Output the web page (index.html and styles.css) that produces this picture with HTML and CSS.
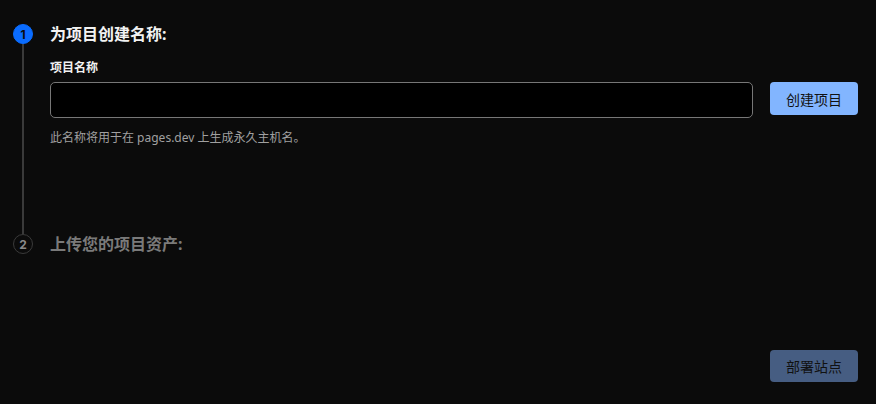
FILE: index.html
```html
<!DOCTYPE html>
<html lang="zh-CN">
<head>
    <meta charset="UTF-8">
    <meta name="viewport" content="width=device-width, initial-scale=1.0">
    <title>创建项目</title>
    <link rel="stylesheet" href="styles.css">
</head>
<body>
    <div class="page">
        <div class="step active">
            <div class="rail">
                <span class="dot">1</span>
                <span class="line"></span>
            </div>
            <div class="content">
                <h2 class="title">为项目创建名称:</h2>
                <label class="label" for="name">项目名称</label>
                <div class="field-row">
                    <input id="name" class="input" type="text">
                    <button class="btn primary">创建项目</button>
                </div>
                <p class="hint">此名称将用于在 pages.dev 上生成永久主机名。</p>
            </div>
        </div>
        <div class="step">
            <div class="rail">
                <span class="dot">2</span>
            </div>
            <div class="content">
                <h2 class="title">上传您的项目资产:</h2>
            </div>
        </div>
        <div class="footer">
            <button class="btn deploy">部署站点</button>
        </div>
    </div>
</body>
</html>
```

FILE: styles.css
```css
body {
    margin: 0;
    background: #0b0b0b;
    font-family: "Noto Sans", "Noto Sans CJK SC", sans-serif;
    color: #e8e8e8;
    height: 100vh;
    box-sizing: border-box;
    overflow: hidden;
}

.page {
    display: flex;
    flex-direction: column;
    height: 100%;
    padding: 24px 18px 22px 13px;
    box-sizing: border-box;
}

.step {
    display: flex;
    gap: 17px;
}

.step.active {
    height: 210px;
}

.rail {
    display: flex;
    flex-direction: column;
    align-items: center;
    width: 20px;
    flex-shrink: 0;
}

.dot {
    width: 20px;
    height: 20px;
    border-radius: 50%;
    box-sizing: border-box;
    display: flex;
    align-items: center;
    justify-content: center;
    font-family: "Inter", "Noto Sans", sans-serif;
    font-size: 12px;
    font-weight: 700;
    border: 1.5px solid #3a3a3a;
    color: #8a8a8a;
}

.active .dot {
    background: #0a6cff;
    border-color: #0a6cff;
    color: #0b0b0b;
}

.line {
    flex: 1;
    width: 2px;
    background: #3a3a3a;
}

.content {
    flex: 1;
    display: flex;
    flex-direction: column;
}

.title {
    margin: 0;
    font-size: 16px;
    line-height: 20px;
    font-weight: 700;
    color: #f2f2f2;
}

.step:not(.active) .title {
    color: #7a7a7a;
}

.label {
    margin-top: 16px;
    font-size: 12px;
    line-height: 16px;
    font-weight: 700;
    color: #f2f2f2;
}

.field-row {
    display: flex;
    align-items: flex-start;
    gap: 17px;
    margin-top: 6px;
}

.input {
    flex: 1;
    height: 36px;
    box-sizing: border-box;
    background: #000;
    border: 1px solid #777;
    border-radius: 5px;
    color: #fff;
}

.btn {
    border: none;
    border-radius: 4px;
    font-family: "Noto Sans CJK SC", sans-serif;
    font-size: 14px;
    color: #111;
    cursor: pointer;
}

.primary {
    width: 88px;
    height: 33px;
    background: #82b5ff;
}

.hint {
    margin: 12px 0 0;
    font-size: 12px;
    line-height: 16px;
    color: #a0a0a0;
}

.footer {
    margin-top: auto;
    display: flex;
    justify-content: flex-end;
}

.deploy {
    width: 88px;
    height: 32px;
    background: #465d82;
}
```
